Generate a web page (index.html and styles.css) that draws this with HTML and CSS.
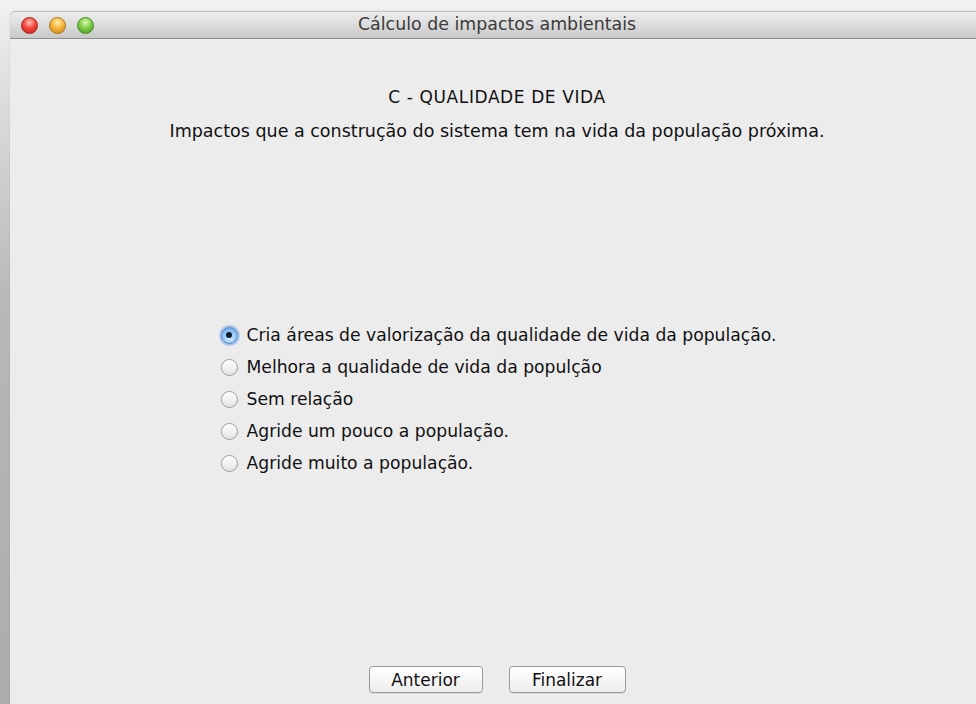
FILE: index.html
```html
<!DOCTYPE html>
<html lang="pt">
<head>
<meta charset="utf-8">
<title>Cálculo de impactos ambientais</title>
<link rel="stylesheet" href="styles.css">
</head>
<body>
<div class="window">
  <div class="titlebar">
    <div class="lights">
      <span class="light red"></span>
      <span class="light yellow"></span>
      <span class="light green"></span>
    </div>
    <div class="title">Cálculo de impactos ambientais</div>
  </div>
  <div class="content">
    <h1 class="heading">C - QUALIDADE DE VIDA</h1>
    <p class="subtitle">Impactos que a construção do sistema tem na vida da população próxima.</p>
    <div class="options">
      <label class="option"><span class="radio checked"></span><span>Cria áreas de valorização da qualidade de vida da população.</span></label>
      <label class="option"><span class="radio"></span><span>Melhora a qualidade de vida da populção</span></label>
      <label class="option"><span class="radio"></span><span>Sem relação</span></label>
      <label class="option"><span class="radio"></span><span>Agride um pouco a população.</span></label>
      <label class="option"><span class="radio"></span><span>Agride muito a população.</span></label>
    </div>
    <div class="buttons">
      <button class="btn btn-prev">Anterior</button>
      <button class="btn btn-next">Finalizar</button>
    </div>
  </div>
</div>
</body>
</html>
```
FILE: styles.css
```css
html, body {
  margin: 0;
  height: 100%;
  overflow: hidden;
}

body {
  background: linear-gradient(to bottom, #f2f2f2 0, #e4e4e4 60px, #b8b8b8 300px, #acacac 100%);
  padding: 11px 0 0 10px;
  box-sizing: border-box;
  font-family: "DejaVu Sans", "Liberation Sans", sans-serif;
  color: #111;
}

.window {
  width: 974px;
  height: 720px;
  background: #ececec;
  border-radius: 5px 5px 0 0;
  box-shadow: 0 0 1px rgba(0,0,0,0.35);
  display: flex;
  flex-direction: column;
}

.titlebar {
  height: 28px;
  box-sizing: border-box;
  border-top: 1px solid #c4c4c4;
  border-bottom: 1px solid #8f8f8f;
  border-radius: 5px 5px 0 0;
  background: linear-gradient(to bottom, #ececec 0%, #dedede 45%, #c8c8c8 100%);
  display: flex;
  align-items: center;
  position: relative;
}

.lights {
  display: flex;
  gap: 11px;
  padding-left: 11px;
  position: relative;
  z-index: 1;
}

.light {
  width: 17px;
  height: 17px;
  border-radius: 50%;
  box-sizing: border-box;
}

.red {
  background: radial-gradient(circle at 50% 30%, #ffc2b8 0, #f4463c 45%, #c21c14 100%);
  border: 1px solid #a3251e;
}

.yellow {
  background: radial-gradient(circle at 50% 30%, #fff0b0 0, #f5b53a 45%, #c98413 100%);
  border: 1px solid #a9731c;
}

.green {
  background: radial-gradient(circle at 50% 30%, #dcfab8 0, #7ecb48 45%, #3e9623 100%);
  border: 1px solid #4f8a2c;
}

.title {
  position: absolute;
  left: 0;
  right: 0;
  top: 2px;
  text-align: center;
  font-size: 17.4px;
  color: #3b3b3b;
}

.content {
  flex: 1;
  display: flex;
  flex-direction: column;
  align-items: center;
}

.heading {
  margin: 48px 0 0;
  font-size: 17px;
  letter-spacing: 0.6px;
  font-weight: normal;
  line-height: 20px;
}

.subtitle {
  margin: 14px 0 0;
  font-size: 17.5px;
  line-height: 20px;
}

.options {
  margin-top: 184px;
  display: flex;
  flex-direction: column;
  gap: 12px;
}

.option {
  display: flex;
  align-items: center;
  gap: 9px;
  font-size: 17.2px;
  line-height: 20px;
}

.radio {
  width: 17px;
  height: 17px;
  border-radius: 50%;
  box-sizing: border-box;
  border: 1px solid #9c9c9c;
  background: linear-gradient(to bottom, #ffffff 0%, #f3f3f3 50%, #e2e2e2 100%);
  margin-left: 3px;
  display: flex;
  align-items: center;
  justify-content: center;
}

.radio.checked {
  border-color: #4f7fc4;
  background: radial-gradient(circle at 50% 70%, #d3ebff 0, #9ccbf5 45%, #5e9ee0 100%);
  box-shadow: 0 0 0 2px rgba(120,170,235,0.55);
}

.radio.checked::after {
  content: "";
  width: 6px;
  height: 6px;
  border-radius: 50%;
  background: #0d1b2c;
}

.buttons {
  margin-top: auto;
  margin-bottom: 38px;
  display: flex;
  gap: 26px;
}

.btn {
  height: 27px;
  padding: 0;
  border: 1px solid #9a9a9a;
  border-radius: 4px;
  background: linear-gradient(to bottom, #ffffff 0%, #f6f6f6 50%, #ededed 100%);
  font-family: inherit;
  font-size: 17px;
  color: #111;
  box-shadow: 0 1px 0 rgba(0,0,0,0.08);
}

.btn-prev { width: 114px; }
.btn-next { width: 117px; }
```
